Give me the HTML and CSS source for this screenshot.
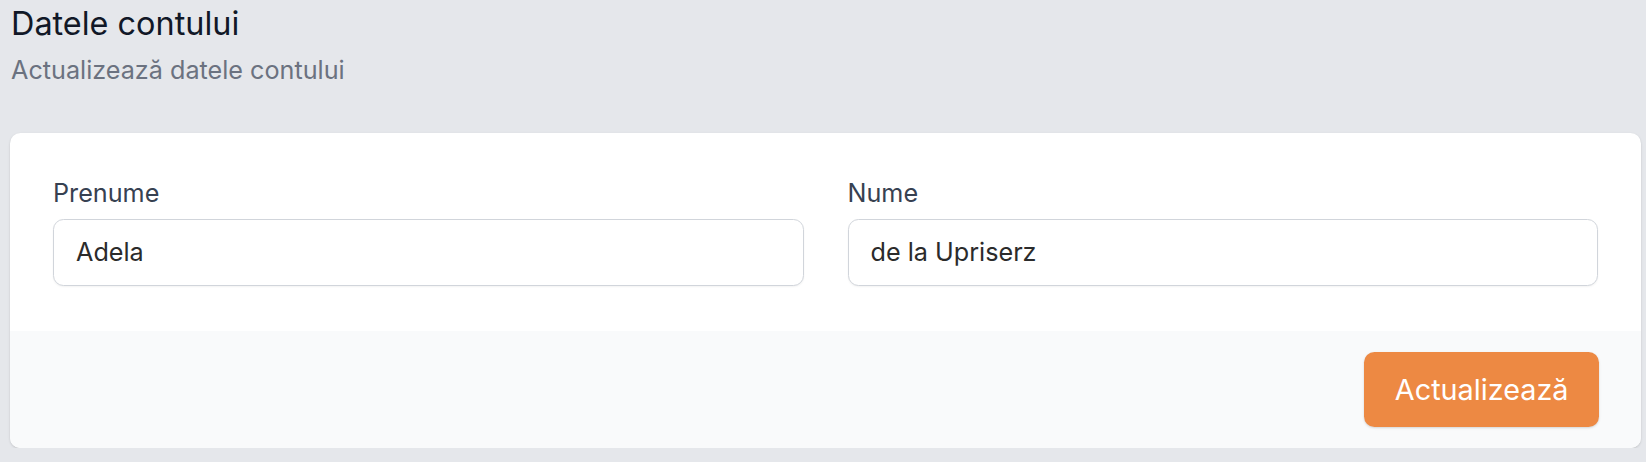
FILE: index.html
```html
<!DOCTYPE html>
<html lang="ro">
<head>
<meta charset="utf-8">
<title>Datele contului</title>
<link rel="stylesheet" href="styles.css">
</head>
<body>
<div class="page">
  <header class="section-head">
    <h2 class="title">Datele contului</h2>
    <p class="subtitle">Actualizează datele contului</p>
  </header>
  <form class="card">
    <div class="card-body">
      <div class="field">
        <label class="label" for="prenume">Prenume</label>
        <input class="input" id="prenume" type="text" value="Adela">
      </div>
      <div class="field">
        <label class="label" for="nume">Nume</label>
        <input class="input" id="nume" type="text" value="de la Upriserz">
      </div>
    </div>
    <div class="card-footer">
      <button class="btn" type="button">Actualizează</button>
    </div>
  </form>
</div>
</body>
</html>
```

FILE: styles.css
```css
* { box-sizing: border-box; }
html, body {
  margin: 0;
  padding: 0;
  background: #e5e7eb;
  font-family: Inter, "Noto Sans", "Liberation Sans", sans-serif;
}
.page {
  padding: 0 0 0 10px;
  width: 1641px;
}
.section-head {
  padding-left: 1px;
}
.title {
  margin: 0;
  font-size: 32.4px;
  line-height: 48px;
  font-weight: 400;
  color: #111827;
}
.subtitle {
  margin: 5px 0 0;
  font-size: 25.2px;
  line-height: 35px;
  color: #6b7280;
}
.card {
  margin-top: 45px;
  background: #ffffff;
  border-radius: 10.5px;
  overflow: hidden;
  box-shadow: 0 1px 3px rgba(0,0,0,0.1), 0 1px 2px rgba(0,0,0,0.06);
}
.card-body {
  display: grid;
  grid-template-columns: 1fr 1fr;
  column-gap: 44px;
  padding: 43px 43px 45px 43px;
}
.field {
  display: flex;
  flex-direction: column;
}
.label {
  font-size: 25.2px;
  line-height: 35px;
  font-weight: 400;
  color: #374151;
}
.input {
  margin-top: 7.5px;
  height: 67px;
  padding: 0 22px;
  border: 1px solid #d1d5db;
  border-radius: 10.5px;
  font-family: inherit;
  font-size: 25.2px;
  color: #2b2b2b;
  background: #fff;
  box-shadow: 0 1px 2px rgba(0,0,0,0.05);
  outline: none;
}
.card-footer {
  display: flex;
  justify-content: flex-end;
  background: #f9fafb;
  padding: 21px 42px 21px 43px;
}
.btn {
  height: 75px;
  padding: 0 30.5px;
  border: none;
  border-radius: 10.5px;
  background: #ed8943;
  color: #ffffff;
  font-family: inherit;
  font-size: 28.8px;
  font-weight: 400;
  box-shadow: 0 1px 3px rgba(0,0,0,0.1), 0 1px 2px rgba(0,0,0,0.06);
  cursor: pointer;
}
```
